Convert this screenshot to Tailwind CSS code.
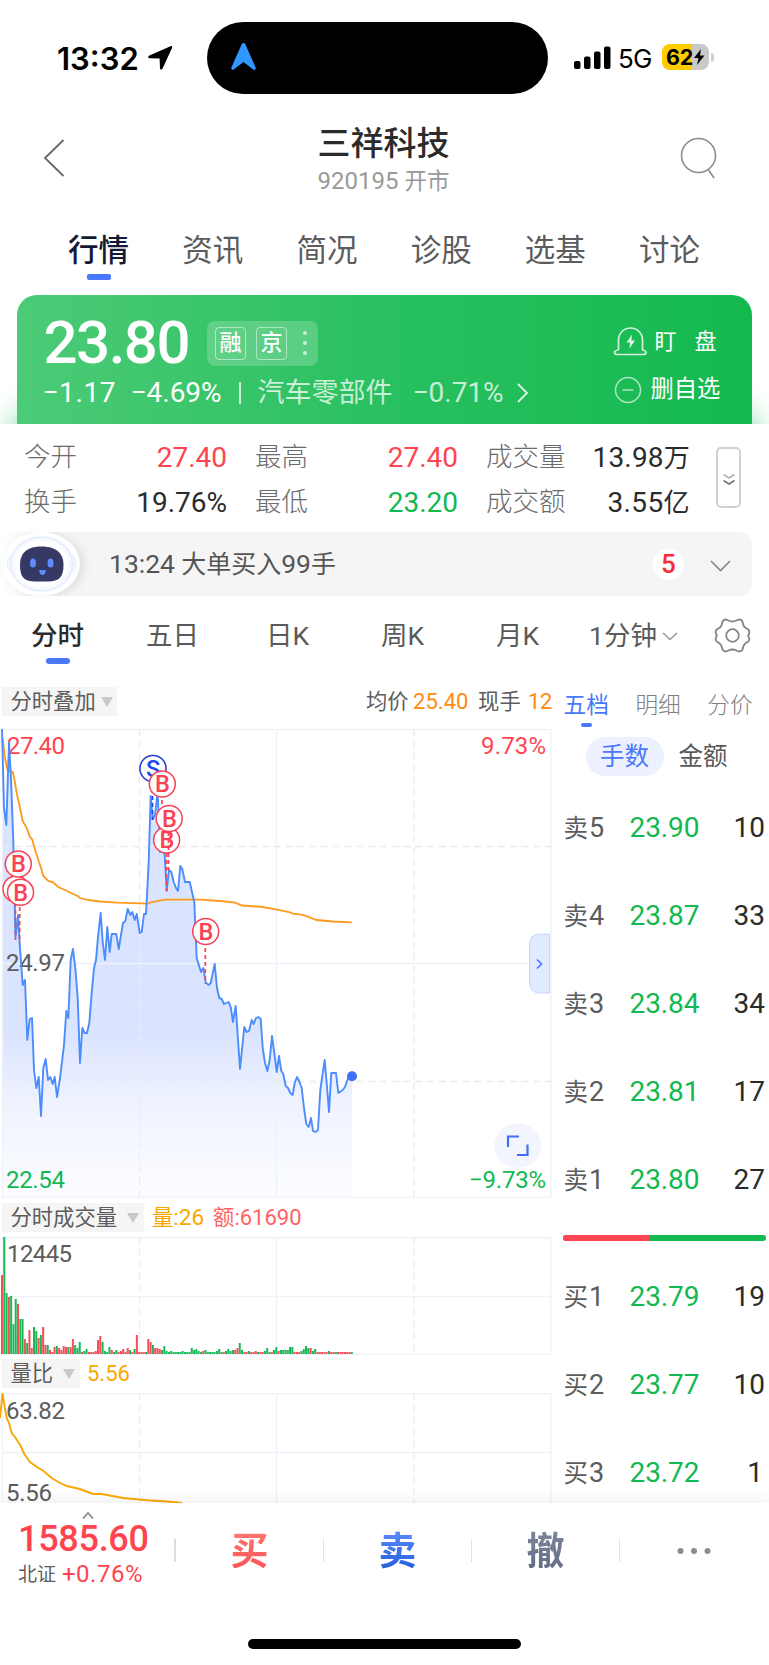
<!DOCTYPE html>
<html lang="zh-CN">
<head>
<meta charset="utf-8">
<title>三祥科技 920195</title>
<script src="https://cdn.jsdelivr.net/npm/@tailwindcss/browser@4"></script>
</head>
<body class="w-[769px] h-[1665px] overflow-hidden bg-white font-[Roboto,'Noto_Sans_CJK_SC',sans-serif] leading-none whitespace-nowrap text-[#2b2b2b]">
<div class="flex flex-col w-[769px] h-[1665px]">

  <!-- Status bar -->
  <header class="flex h-[113px] pt-[22px] shrink-0">
    <div class="flex items-center h-[72px] w-[207px] pl-[57px] text-black">
      <span class="w-[85px] font-[Inter] font-semibold text-[31px] tracking-[0px]">13:32</span>
      <svg class="ml-[5px] -mt-[1px]" width="26" height="26" viewBox="0 0 26 26"><path d="M23.5 1.2Q25.8.6 25 3L15.6 23.6Q14 26 13 23.2L12.6 13.6 2.6 13.2Q-.4 12.4 2.4 10.4Z" fill="#000"/></svg>
    </div>
    <div class="flex items-center h-[72px] w-[341px] rounded-full bg-black pl-[24px]">
      <svg width="25" height="27" viewBox="0 0 25 27" class="-mt-[3px]"><path d="M12.5 0C14 0 14.6 1.4 15 2.7L24.6 24.4C25.2 26.4 23.4 27.4 21.9 26.2L12.5 19 3.1 26.2C1.6 27.4-.2 26.4.4 24.4L10 2.7C10.4 1.4 11 0 12.5 0Z" fill="#2f97ff"/></svg>
    </div>
    <div class="flex items-center h-[72px] pl-[26px] text-black">
      <svg width="37" height="24" viewBox="0 0 37 24" class="-mt-[1px]"><rect x="0" y="15" width="6.500" height="8" rx="2"/><rect x="10" y="10.500" width="6.500" height="12.500" rx="2"/><rect x="20" y="5.500" width="6.500" height="17.500" rx="2"/><rect x="30" y="0.500" width="6.500" height="22.500" rx="2"/></svg>
      <span class="ml-[7px] w-[36px] pt-[2px] font-[Inter] text-[26px] tracking-[-0.8px]">5G</span>
      <div class="relative ml-[8px] -mt-[2px] flex items-center w-[47px] h-[26px] rounded-[8px] bg-linear-to-r from-[#ffcc00] from-64% to-[#c9c9c9] to-64%">
        <span class="pl-[4px] pt-px font-[Inter] font-bold text-[21.500px] tracking-[-0.2px]">62</span>
        <svg width="12" height="16" viewBox="0 0 12 16"><path d="M8 0 1 9H5.500L4 16 11.500 6.500H7Z"/></svg>
        <span class="absolute left-[48.500px] top-[9px] w-[3px] h-[9px] rounded-r-full bg-[#cfcfcf]"></span>
      </div>
    </div>
  </header>

  <!-- Title -->
  <div class="flex items-start justify-between h-[107px] shrink-0 pl-[43px] pr-[51px]">
    <svg class="mt-[26px]" width="22" height="38" viewBox="0 0 22 38" fill="none" stroke="#666" stroke-width="1.800"><path d="M20.500 1 2 19 20.500 37"/></svg>
    <div class="flex flex-col items-center pl-[22px] pt-[13px]">
      <h1 class="text-[33px] leading-[36px] font-medium">三祥科技</h1>
      <p class="mt-[6px] text-[24px] leading-[26px] text-[#999]">920195 <span class="text-[22.500px]">开市</span></p>
    </div>
    <svg class="mt-[24px]" width="38" height="43" viewBox="0 0 38 43" fill="none" stroke="#8c8c8c" stroke-width="1.600"><circle cx="18.500" cy="18.500" r="17"/><path d="M28.500 33 34 41"/></svg>
  </div>

  <!-- Main tabs -->
  <nav class="flex h-[75px] shrink-0 pl-[41.500px] text-[30.500px] text-[#5c5c5c]">
    <div class="flex flex-col items-center w-[114.200px] pt-[16px]"><span class="font-medium text-[#131a33]">行情</span><i class="mt-[7px] w-[24px] h-[6px] rounded-[2px] bg-[#4a78fb]"></i></div>
    <div class="w-[114.200px] pt-[16px] text-center">资讯</div>
    <div class="w-[114.200px] pt-[16px] text-center">简况</div>
    <div class="w-[114.200px] pt-[16px] text-center">诊股</div>
    <div class="w-[114.200px] pt-[16px] text-center">选基</div>
    <div class="w-[114.200px] pt-[16px] text-center">讨论</div>
  </nav>

  <!-- Price card -->
  <section class="flex h-[129px] shrink-0 px-[16.500px] overflow-hidden">
    <div class="flex justify-between w-[735px] rounded-t-[20px] bg-linear-to-r from-[#4bcb76] via-[#28c060] to-[#13b94f] text-white shadow-[0_124px_36px_0_#22bd5f]">
      <div class="pl-[27px] pt-[23px]">
        <div class="flex items-center h-[50px]">
          <span class="w-[163.500px] text-[60px] font-medium tracking-[-1.500px]">23.80</span>
          <div class="flex items-center w-[111px] h-[45px] rounded-[8px] bg-white/20 pl-[8px]">
            <span class="flex items-center justify-center w-[31px] h-[33px] rounded-[4px] border border-white/50 text-[22px] font-medium">融</span>
            <span class="ml-[10px] flex items-center justify-center w-[31px] h-[33px] rounded-[4px] border border-white/50 text-[22px] font-medium">京</span>
            <svg class="ml-[15px]" width="6" height="26" viewBox="0 0 6 26" fill="#fff" fill-opacity=".65"><circle cx="3" cy="3" r="2"/><circle cx="3" cy="13" r="2"/><circle cx="3" cy="23" r="2"/></svg>
          </div>
        </div>
        <div class="flex items-center h-[40px] mt-[5px] text-[28px]">
          <span class="w-[88px] -ml-[1px] tracking-[0.600px]">−1.17</span><span class="w-[105px]">−4.69%</span>
          <i class="w-[2px] h-[22px] bg-white/75 ml-[3px]"></i>
          <span class="ml-[17px] text-[27px] text-white/75">汽车零部件</span>
          <span class="ml-[20px] w-[92px] text-white/75">−0.71%</span>
          <svg class="ml-[11px]" width="13" height="20" viewBox="0 0 13 20" fill="none" stroke="#fff" stroke-opacity=".85" stroke-width="1.800"><path d="M2 1 11 10 2 19"/></svg>
        </div>
      </div>
      <div class="w-[139px] pt-[31px] text-[22px]">
        <div class="flex items-center h-[31px]">
          <svg width="34" height="31" viewBox="0 0 34 31" fill="none" stroke="#fff" stroke-opacity=".8" stroke-width="1.700"><path d="M5.500 24V14a12 12 0 0 1 24 0V24q3.500.5 3.500 2.500t-3 2H4.500q-3 0-3-2t4-2.500"/><path d="M19 8.500 13.500 16.500H17L16.500 22.500 22 14.500H18.500Z" fill="#fff" fill-opacity=".85" stroke="none"/></svg>
          <span class="ml-[8px]">盯</span><span class="ml-[18px]">盘</span>
        </div>
        <div class="flex items-center h-[34px] mt-[16px]">
          <svg class="ml-[1px]" width="28" height="28" viewBox="0 0 28 28" fill="none" stroke="#fff" stroke-opacity=".65" stroke-width="1.500"><circle cx="14" cy="14" r="12.500"/><path d="M8.500 14h11"/></svg>
          <span class="ml-[9px] -mt-[1px] text-[23.300px]">删自选</span>
        </div>
      </div>
    </div>
  </section>

  <!-- Statistics -->
  <section class="flex h-[108px] shrink-0 pl-[24px] pt-[11px] bg-white z-10">
    <div class="grid grid-cols-[54px_149px_28px_54px_149px_28px_81px_123px] auto-rows-[45px] items-center text-[28px]">
      <span class="text-[26.500px] font-light text-[#6c6c6c]">今开</span><span class="text-right text-[#ff4450]">27.40</span><i></i>
      <span class="text-[26.500px] font-light text-[#6c6c6c]">最高</span><span class="text-right text-[#ff4450]">27.40</span><i></i>
      <span class="text-[26.500px] font-light text-[#6c6c6c]">成交量</span><span class="text-right tracking-[0.200px]">13.98<span class="text-[26px]">万</span></span>
      <span class="text-[26.500px] font-light text-[#6c6c6c]">换手</span><span class="text-right">19.76%</span><i></i>
      <span class="text-[26.500px] font-light text-[#6c6c6c]">最低</span><span class="text-right text-[#12b850]">23.20</span><i></i>
      <span class="text-[26.500px] font-light text-[#6c6c6c]">成交额</span><span class="text-right tracking-[0.400px]">3.55<span class="text-[26px]">亿</span></span>
    </div>
    <div class="ml-[26px] mt-[12px] flex items-center justify-center w-[25px] h-[61px] rounded-[5px] border-2 border-[#d2d2d2]">
      <svg width="14" height="13" viewBox="0 0 14 13" fill="none" stroke-width="1.700" class="mt-[4px]"><path d="M1.500 1.500 7 5 12.500 1.500" stroke="#b5b5b5"/><path d="M1.500 7.500 7 11 12.500 7.500" stroke="#777"/></svg>
    </div>
  </section>

  <!-- Notice -->
  <section class="flex items-center h-[64px] w-[752px] shrink-0 rounded-r-[12px] bg-linear-to-r from-white to-[#f5f5f5] to-6% overflow-hidden">
    <svg class="ml-[2px] rounded-full drop-shadow-[4px_1px_5px_#00000018]" width="78" height="64" viewBox="0 0 78 64">
      <ellipse cx="39" cy="32" rx="39" ry="32" fill="#fff"/>
      <rect x="5.500" y="22" width="68" height="19" rx="8" fill="#f6f9ff" stroke="#e4ebfd"/>
      <ellipse cx="39.500" cy="32" rx="31" ry="27" fill="#f6f9ff" stroke="#e4ebfd" stroke-width="1.500"/>
      <ellipse cx="39.500" cy="32" rx="27" ry="23.500" fill="#fff"/>
      <path d="M39.500 14.500C56 14.500 61.500 23 61.500 33 61.500 45 57 49.500 46 49.500H33C22 49.500 18 45 18 33 18 23 23 14.500 39.500 14.500Z" fill="#353963"/>
      <ellipse cx="31" cy="31" rx="3" ry="4.500" fill="#5f8dff"/><ellipse cx="48.500" cy="31" rx="3" ry="4.500" fill="#5f8dff"/>
      <path d="M38 38h5q1 0 .7 1.200Q43 43 40.500 43t-3.200-3.800Q37 38 38 38Z" fill="#5f8dff"/>
    </svg>
    <span class="ml-[29px] text-[25px] text-[#555]"><span class="text-[26.500px]">13:24</span> 大单买入<span class="text-[26.500px]">99</span>手</span>
    <span class="ml-auto flex items-center justify-center size-[31px] rounded-full bg-white text-[26px] font-medium text-[#fa2c38]">5</span>
    <svg class="ml-[26px] mr-[21px] mt-[3px]" width="21" height="12" viewBox="0 0 21 12" fill="none" stroke="#888" stroke-width="1.700"><path d="M1 1 10.500 10.500 20 1"/></svg>
  </section>

  <!-- Period tabs -->
  <nav class="flex h-[83px] shrink-0 text-[26.500px] text-[#5a5a5a]">
    <div class="flex flex-col items-center w-[115px] pt-[27px]"><span class="font-medium text-[#2b2b2b]">分时</span><i class="mt-[8.500px] w-[24px] h-[6px] rounded-full bg-[#4a78fb]"></i></div>
    <div class="w-[115px] pt-[27px] text-center">五日</div>
    <div class="w-[115px] pt-[27px] text-center">日K</div>
    <div class="w-[115px] pt-[27px] text-center">周K</div>
    <div class="w-[115px] pt-[27px] text-center">月K</div>
    <div class="flex w-[125px] pt-[27px] pl-[14px]">1分钟<svg class="mt-[9px] ml-[5px]" width="16" height="9" viewBox="0 0 16 9" fill="none" stroke="#999" stroke-width="1.500"><path d="M1 1 8 7.500 15 1"/></svg></div>
    <svg class="mt-[20.500px] ml-[14px]" width="37" height="37" viewBox="0 0 37 37" fill="none" stroke="#858585" stroke-width="1.800"><circle cx="18.500" cy="18.500" r="6.300"/><path d="M14.500 3.500Q18.500 5.500 22.500 3.500L24.500 2.600Q27 2 28.500 4.500 29.300 9.500 31.500 10.800L34 12.300Q36 14 35 17 33.500 18.500 35 20.500 36 23.500 34 24.800L31.500 26.300Q29.300 28 28.500 32.500 27 35 24.500 34.400L22.500 33.500Q18.500 31.500 14.500 33.500L12.500 34.400Q10 35 8.500 32.500 7.700 28 5.500 26.300L3 24.800Q1 23.500 2 20.500 3.500 18.500 2 17 1 14 3 12.300L5.500 10.800Q7.700 9.500 8.500 4.500 10 2 12.500 2.600Z" stroke-linejoin="round"/></svg>
  </nav>

  <!-- Charts and order book -->
  <main class="flex h-[824px] shrink-0 overflow-hidden">
    <div class="w-[552px] shrink-0">
      <div class="flex items-center h-[49px] pt-[8px] pb-[12px] pl-[2px] text-[21.300px] text-[#5c5c5c]">
        <div class="flex items-center w-[115px] h-[29px] bg-[#f5f5f5] pl-[8.500px]">分时叠加<svg class="ml-[5px]" width="12" height="10"><path d="M0 0H12L6 10Z" fill="#c8c8c8"/></svg></div>
        <span class="ml-[249px]">均价</span><span class="ml-[4.500px] w-[55px] text-[22px] text-[#ff8a10]">25.40</span><span class="ml-[10px]">现手</span><span class="ml-[7px] text-[22.500px] text-[#ff8a10] tracking-[-0.500px]">12</span>
      </div>

      <svg class="block" width="552" height="470" viewBox="0 728 552 470" fill="none">
        <defs><linearGradient id="area" x1="0" y1="729" x2="0" y2="1197" gradientUnits="userSpaceOnUse"><stop offset="0" stop-color="#dbe4ff"/><stop offset=".65" stop-color="#dbe4ff"/><stop offset=".8" stop-color="#eff3ff"/><stop offset="1" stop-color="#fdfdff"/></linearGradient></defs>
        <polygon id="fill" fill="url(#area)"/>
        <g stroke="#edf1f8" stroke-width="1.300"><path d="M2.500 729.500H551V1197.500H2.500ZM276.500 729V1197M2 963.500H551"/><path d="M139.500 729V1197M414 729V1197M2 846.500H551M2 1081.500H551" stroke="#e9ecf1" stroke-dasharray="7.500 4.300"/></g>
        <g font-size="24" fill="#5c5c5c"><text x="7" y="754" textLength="58" fill="#ff4450">27.40</text><text x="6" y="971" textLength="59">24.97</text><text x="6" y="1188" textLength="59" fill="#12b850">22.54</text><text x="481" y="754" textLength="65" fill="#ff4450">9.73%</text><text x="469" y="1188" textLength="77" fill="#12b850">−9.73%</text></g>
        <polyline stroke="#fd9a1e" stroke-width="1.800" points="2.700,738 5,758 7.500,770 12.700,772 14,777 16.700,793 20,808 22.700,821 26.700,828 30,837 32,839 36,853 40.700,867 43.300,876 48.300,881 52.700,882 58.300,887 65,890 73.300,894 77.700,896 80,898 88.300,900 100,901.500 117,902.700 148,903.700 152,902 165,899.700 200,899.700 220,901 235,902.700 242,905.500 263,907 277,909.700 289,912 293,913.700 300,914.300 305,915.700 316.700,920 333,921.500 351.700,922.300"/>
        <polyline id="price" stroke="#4b8dfc" stroke-width="1.900" stroke-linejoin="round" points="2,729 4,808 6.300,825 9,743 11,778 13.300,842 15.500,938 18,915 19.300,938 22.700,985 25,980 27.300,1040 29.700,1019 32,1018 34,1070 36.300,1088 38.700,1077 41,1116 43.300,1068 45.700,1059 48,1080 50.300,1077 52.700,1084 54.700,1077 57,1097 60,1078 64,1045 66.300,1011 68.300,1018 70.700,960 73,949 75.300,968 77.700,998 80,1063 82.300,1028 84.700,1033 87,1033 89.300,1023 91.700,993 94,968 96,960 98,937 100.700,913 102.700,942 105,960 107.300,927 109.700,952 111.700,934 116.300,934 118.700,949 123,923 125.300,921 127.700,909 130.300,915 132.300,912 134.700,920 136.700,914 139.700,933 141.700,932 144,914 146,914 148.700,862 150.700,796 152.700,819 155,815 157.700,792 160,852 162.300,847 164.700,855 166.700,891 169,870 171.300,872 173.700,882 176,888 178,891 180.300,866 182.300,869 185,882 189.700,882 194.300,902 196.700,958 201,972 203.300,968 205.700,982 208.300,985 210.700,983 214.700,964 217,988 219.300,998 221.700,999 224,1004 228.700,1002 230.700,1007 233,1022 235.700,1006 240,1069 244.300,1027 246.700,1032 249,1031 251.700,1020 253.700,1024 256,1018 258.300,1017 260.700,1019 262.700,1048 265,1063 267.300,1071 269.700,1060 272,1036 274.300,1053 276.700,1072 279,1056 281.300,1071 283.300,1074 285.700,1086 288,1088 290.300,1093 292.700,1095 294.700,1083 297,1077 299.500,1082 301.700,1088 304,1108 306.300,1124 308.700,1127 311,1118 313,1131 315.300,1132 318,1130 320.300,1090 324.700,1060 327,1087 329,1112 331.300,1073 336,1073 338.300,1093 342.700,1090 345,1087 347.700,1079 352,1076"/>
        <circle cx="352" cy="1076.300" r="5" fill="#3f70f5"/>
        <g stroke="#fb4152" stroke-width="1.700" stroke-dasharray="4 3"><path d="M162 800V806M166.500 853V891M168.500 832V870M15.500 903V940M19.700 907V943M205.300 948V984"/><path d="M152.500 782V820" stroke="#1a45f0"/></g>
        <g fill="#fff" stroke-width="1.500" stroke="#fb4152" font-size="23.500" font-weight="500" text-anchor="middle">
          <g><circle cx="153" cy="768.500" r="13"/><circle cx="153" cy="768.500" r="13" stroke="#1f49ee"/><text x="153" y="777" fill="#1f49ee" stroke="none">S</text></g>
          <g><circle cx="162.300" cy="784" r="13"/><text x="162.500" y="792.300" fill="#fb4152" stroke="none">B</text></g>
          <g><circle cx="166.600" cy="840" r="13"/><text x="166.800" y="848.300" fill="#fb4152" stroke="none">B</text></g>
          <path d="M168.500 832V850" stroke-dasharray="4 3" stroke-width="1.700"/>
          <g><circle cx="169.200" cy="818.500" r="13"/><text x="169.400" y="826.800" fill="#fb4152" stroke="none">B</text></g>
          <g><circle cx="16" cy="889" r="13"/></g>
          <g><circle cx="18.300" cy="864" r="13"/><text x="18.500" y="872.300" fill="#fb4152" stroke="none">B</text></g>
          <g><circle cx="20.500" cy="892.300" r="13"/><text x="20.700" y="900.600" fill="#fb4152" stroke="none">B</text></g>
          <g><circle cx="205.700" cy="931.500" r="13"/><text x="205.900" y="939.800" fill="#fb4152" stroke="none">B</text></g>
        </g>
        <path d="M549.500 934H540Q529.500 934 529.500 945V982Q529.500 993 540 993H549.500Z" fill="#e1ebff" stroke="#c6d6fd"/><path d="M537 959.500 541.500 964 537 968.500" stroke="#4a78fb" stroke-width="1.700"/>
        <ellipse cx="517.700" cy="1145.500" rx="23.500" ry="22.300" fill="#f2f5fe"/><path d="M508 1147V1136.500H519M517 1155H527.500V1144.500" stroke="#3f70f5" stroke-width="2.200"/>
      </svg>

      <div class="flex items-center h-[38px] pt-[5px] pb-[4px] pl-[2px] text-[21.300px] text-[#5c5c5c]">
        <div class="flex items-center w-[142px] h-[29px] bg-[#f5f5f5] pl-[8.500px]">分时成交量<svg class="ml-[10px]" width="12" height="10"><path d="M0 0H12L6 10Z" fill="#c8c8c8"/></svg></div>
        <span class="ml-[8px] text-[#f9a800]">量<span class="text-[22.500px]">:26</span></span><span class="ml-[9px] text-[#ff6464]">额<span class="text-[22px]">:61690</span></span>
      </div>

      <svg class="block" width="552" height="119" viewBox="0 1236 552 119" fill="none">
        <g stroke="#edf1f8" stroke-width="1.300"><path d="M2.500 1237.500H551V1354.300H2.500ZM276.500 1237V1354M2 1296.500H551"/><path d="M139.500 1237V1354M414 1237V1354" stroke="#e9ecf1" stroke-dasharray="7.500 4.300"/></g>
        <g id="vol"></g>
        <text x="7" y="1262" font-size="24" textLength="65" fill="#5c5c5c">12445</text>
      </svg>

      <div class="flex items-center h-[38px] pt-[4px] pb-[5px] pl-[2px] text-[21.300px] text-[#5c5c5c]">
        <div class="flex items-center w-[78px] h-[29px] bg-[#f5f5f5] pl-[8.500px]">量比<svg class="ml-[10px]" width="12" height="10"><path d="M0 0H12L6 10Z" fill="#c8c8c8"/></svg></div>
        <span class="ml-[7px] text-[22px]  text-[#f9a800]">5.56</span>
      </div>

      <svg class="block" width="552" height="112" viewBox="0 1393 552 112" fill="none">
        <g stroke="#edf1f8" stroke-width="1.300"><path d="M2.500 1510V1393.700H551V1510M276.500 1393V1510M2 1452.500H551"/><path d="M139.500 1393V1510M414 1393V1510" stroke="#e9ecf1" stroke-dasharray="7.500 4.300"/></g>
        <g font-size="24" fill="#5c5c5c"><text x="6" y="1419" textLength="59">63.82</text><text x="6" y="1501" textLength="46">5.56</text></g>
        <polyline stroke="#f9a800" stroke-width="1.900" points="0,1418 2.500,1393 4.700,1407 6.700,1418 9,1423 11.700,1433 15,1437 20.700,1446 24.300,1454 30,1462 38.300,1468 42.300,1470 51.700,1478 58.300,1482 66.700,1486 80,1489 93,1494 101.700,1494 123,1498 147,1500.300 167,1501.500 182,1503"/>
      </svg>
    </div>

    <!-- Order book -->
    <aside class="w-[217px] pl-[11.500px] pr-[4px]">
      <div class="flex h-[58px] pt-[16px] gap-[26.500px] text-[22.700px] text-[#808080] font-light">
        <div class="flex flex-col items-center font-normal text-[#4a78fb]">五档<i class="mt-[5px] w-[11px] h-[4px] rounded-full bg-[#4a78fb]"></i></div><span>明细</span><span>分价</span>
      </div>
      <div class="flex items-center h-[39px] pl-[22px] text-[24.500px] text-[#5a5a5a]">
        <span class="flex items-center justify-center w-[78px] h-[39px] pt-[2px] rounded-full bg-[#ecf0ff] text-[#4a78fb]">手数</span><span class="ml-[15px] pt-[2px]">金额</span>
      </div>
      <div id="asks" class="pt-[8px]"></div>
      <div class="flex mt-[11px] -ml-[0.500px] w-[203px] h-[6px] rounded-full overflow-hidden bg-[#12b850]"><i class="w-[86.500px] bg-[#ff4450]"></i></div>
      <div id="bids" class="pt-[12px]"></div>
    </aside>
  </main>

  <!-- Bottom bar -->
  <footer class="relative z-10 h-[162px] shrink-0 bg-white shadow-[0_-2px_14px_#00000012]">
    <div class="flex h-[96px]">
      <div class="w-[174px] pl-[18px] pt-[9px] text-[#ff4450]">
        <svg class="ml-[64px]" width="12" height="7" viewBox="0 0 12 7" fill="none" stroke="#888" stroke-width="1.700"><path d="M1 6.500 6 1 11 6.500"/></svg>
        <div class="mt-[2px] text-[36px] leading-[36px] font-medium tracking-[-0.300px]">1585.60</div>
        <div class="flex items-center mt-[5px] h-[24px] text-[24px] tracking-[0.500px]"><span class="text-[19px] text-[#5c5c5c] w-[44px] tracking-normal">北证</span>+0.76%</div>
      </div>
      <div class="flex items-center h-[95px]">
        <i class="w-[2px] h-[23px] bg-[#dcdcdc]"></i>
        <span class="w-[147px] text-center text-[38px] font-bold bg-linear-to-b from-[#ff7a70] to-[#ff4a55] bg-clip-text text-transparent leading-[48px]">买</span>
        <i class="w-px h-[23px] bg-[#e2e2e2]"></i>
        <span class="w-[147px] text-center text-[38px] font-bold bg-linear-to-b from-[#5f8dff] to-[#1a58d8] bg-clip-text text-transparent leading-[48px]">卖</span>
        <i class="w-px h-[23px] bg-[#e2e2e2]"></i>
        <span class="w-[147px] text-center text-[38px] font-bold bg-linear-to-b from-[#7d879e] to-[#5f6a82] bg-clip-text text-transparent leading-[48px]">撤</span>
        <i class="w-px h-[23px] bg-[#e2e2e2]"></i>
        <svg class="ml-[57px]" width="34" height="6" fill="#8c8c8c"><circle cx="3.500" cy="3" r="3"/><circle cx="17" cy="3" r="3"/><circle cx="30.500" cy="3" r="3"/></svg>
      </div>
    </div>
    <div class="mt-[40px] ml-[248px] w-[273px] h-[10px] rounded-full bg-black"></div>
  </footer>
</div>

<script>
  const row = (n, p, q) => `<div class="flex items-center h-[88px]"><span class="w-[66px] text-[24.500px] text-[#5c5c5c]">${n[0]}<span class="ml-[1px] text-[27px]">${n[1]}</span></span><span class="w-[70px] text-[28px] tracking-[-0.100px] text-[#12b850]">${p}</span><span class="ml-auto text-[28px] ${q === '1' ? 'pr-[2px]' : ''}">${q}</span></div>`;
  document.getElementById('asks').innerHTML = [['卖5','23.90','10'],['卖4','23.87','33'],['卖3','23.84','34'],['卖2','23.81','17'],['卖1','23.80','27']].map(r => row(...r)).join('');
  document.getElementById('bids').innerHTML = [['买1','23.79','19'],['买2','23.77','10'],['买3','23.72','1']].map(r => row(...r)).join('');

  document.getElementById('fill').setAttribute('points', document.getElementById('price').getAttribute('points') + ' 352.500,1197 2.500,1197');

  // One entry per minute: colour (r up, g down) and bar height.
  const volume = 'r79 g117 g61 r57 g58 g30 g55 r50 g35 g35 r15 g11 r24 r6 g27 g23 r16 g19 r27 r9 g9 r4 r2 r7 g8 r6 r4 r8 r7 g7 r7 r15 g9 g6 g12 r2 g3 g5 r2 r2 r2 r3 r14 r18 g12 g3 g2 g7 r4 g2 g4 r2 r3 r5 r2 r6 g4 r2 g5 r19 r2 r2 r2 g2 r15 r12 g9 r6 r6 r5 g4 g8 g3 g2 g3 g2 g2 g2 g2 g3 g2 g2 g2 g6 g4 g5 g3 g2 r3 g4 g2 g2 g2 g2 g3 g5 g2 r2 g3 g5 g3 g4 r4 r6 g11 g4 r2 r2 g3 r2 r2 r3 g2 r2 r2 g3 g6 g2 r2 g4 g7 r3 g4 g4 g4 g4 g7 g7 r2 r2 r2 g3 g5 g8 g6 r6 g3 g5 r2 r2 r2 r2 r2 g3 r2 r2 g2 r2 r2 r2 r2 r2 r2 g2'.split(' ');
  document.getElementById('vol').innerHTML = volume.map((v, i) => {
    const h = +v.slice(1);
    return `<rect x="${(1 + i * 2.286).toFixed(2)}" y="${1354 - h}" width="2" height="${h}" fill="${v[0] === 'r' ? '#fa4b58' : '#17b955'}"/>`;
  }).join('');
</script>
</body>
</html>
